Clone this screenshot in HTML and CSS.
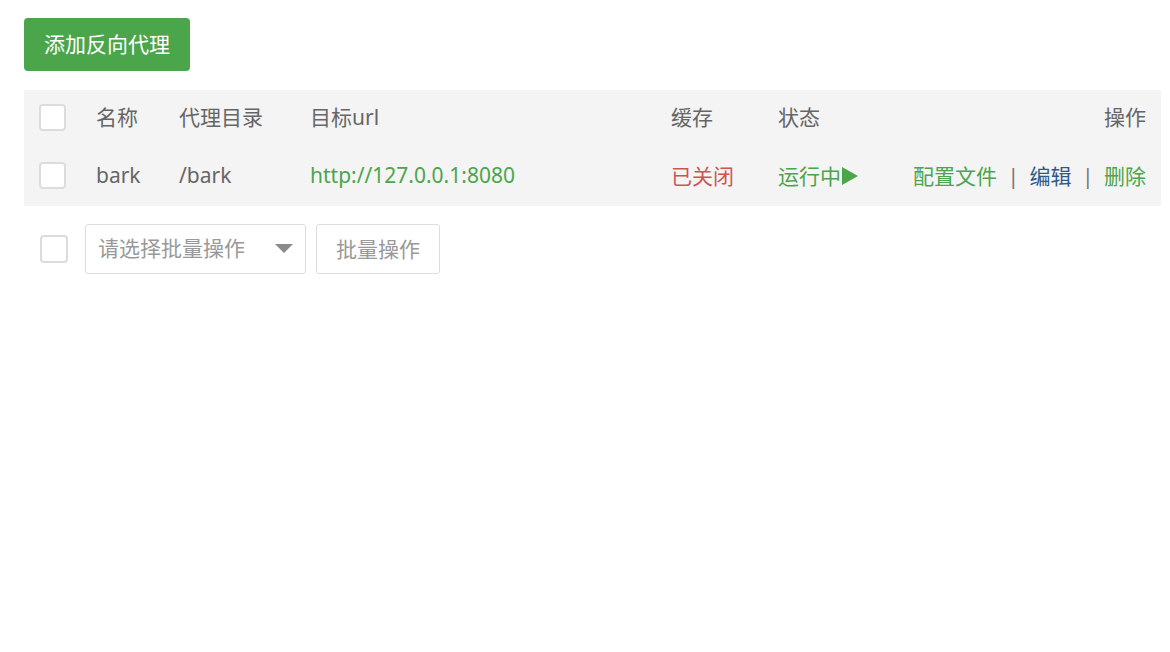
FILE: index.html
```html
<!DOCTYPE html>
<html lang="zh-CN">
<head>
    <meta charset="UTF-8">
    <meta name="viewport" content="width=device-width, initial-scale=1.0">
    <title>反向代理</title>
    <link rel="stylesheet" href="styles.css">
</head>
<body>
    <div class="page">
        <button class="btn-add">添加反向代理</button>

        <table class="proxy-table">
            <thead>
                <tr>
                    <th class="col-check"><input type="checkbox" class="check"></th>
                    <th class="col-name">名称</th>
                    <th class="col-dir">代理目录</th>
                    <th class="col-url">目标url</th>
                    <th class="col-cache">缓存</th>
                    <th class="col-status">状态</th>
                    <th class="col-ops">操作</th>
                </tr>
            </thead>
            <tbody>
                <tr>
                    <td class="col-check"><input type="checkbox" class="check"></td>
                    <td>bark</td>
                    <td>/bark</td>
                    <td><a class="url" href="#">http://127.0.0.1:8080</a></td>
                    <td class="off">已关闭</td>
                    <td class="running">运行中<span class="play"></span></td>
                    <td class="col-ops">
                        <a class="link-green" href="#">配置文件</a>
                        <span class="sep">|</span>
                        <a class="link-blue" href="#">编辑</a>
                        <span class="sep">|</span>
                        <a class="link-green" href="#">删除</a>
                    </td>
                </tr>
            </tbody>
        </table>

        <div class="batch">
            <input type="checkbox" class="check">
            <div class="select-wrap">
                <select class="batch-select">
                    <option>请选择批量操作</option>
                </select>
            </div>
            <button class="btn-batch">批量操作</button>
        </div>
    </div>
</body>
</html>
```

FILE: styles.css
```css
body {
    margin: 0;
    padding: 0;
    background-color: #fff;
    font-family: "Noto Sans", "Noto Sans CJK SC", sans-serif;
    font-size: 21px;
    color: #666;
}
.page {
    padding: 18px 9px 0 24px;
}
.btn-add {
    display: block;
    height: 53px;
    padding: 0 20px 3px 20px;
    background-color: #4ba54b;
    color: #fff;
    border: none;
    border-radius: 4px;
    font-family: inherit;
    font-size: 21px;
    cursor: pointer;
}
.proxy-table {
    width: 100%;
    margin-top: 19px;
    border-collapse: collapse;
    background-color: #f4f4f4;
}
.proxy-table th,
.proxy-table td {
    padding: 0 15px;
    font-weight: normal;
    text-align: left;
    white-space: nowrap;
}
.proxy-table thead tr {
    height: 56px;
}
.proxy-table thead th {
    padding-bottom: 5px;
}
.proxy-table tbody tr {
    height: 60px;
}
.proxy-table tbody td {
    padding-bottom: 2px;
}
.col-check {
    width: 27px;
}
.col-name {
    width: 53px;
}
.col-dir {
    width: 101px;
}
.col-url {
    width: 331px;
}
.col-cache {
    width: 77px;
}
.proxy-table .col-ops {
    text-align: right;
}
.check {
    appearance: none;
    -webkit-appearance: none;
    display: block;
    width: 27px;
    height: 27px;
    margin: 0;
    background-color: #fff;
    border: 2px solid #dcdcdc;
    border-radius: 4px;
    box-sizing: border-box;
}
.proxy-table thead .check {
    margin-top: 3px;
}
.proxy-table tbody .check {
    margin-top: 1px;
}
a {
    text-decoration: none;
}
.url {
    color: #4ba54b;
}
.off {
    color: #d05353;
}
.running {
    color: #4ba54b;
}
.play {
    display: inline-block;
    width: 0;
    height: 0;
    margin-left: 1px;
    border-top: 9px solid transparent;
    border-bottom: 9px solid transparent;
    border-left: 16px solid #4ba54b;
    vertical-align: -1px;
}
.link-green {
    color: #4ba54b;
}
.link-blue {
    color: #2d5a8a;
}
.sep {
    color: #777;
    margin: 0 5px;
}
.batch {
    display: flex;
    align-items: center;
    margin-top: 18px;
    padding-left: 16px;
}
.batch .check {
    width: 28px;
    height: 28px;
}
.select-wrap {
    position: relative;
    margin-left: 17px;
}
.select-wrap::after {
    content: "";
    position: absolute;
    right: 13px;
    top: 20px;
    border-left: 9px solid transparent;
    border-right: 9px solid transparent;
    border-top: 9px solid #8a8a8a;
}
.batch-select {
    appearance: none;
    -webkit-appearance: none;
    width: 221px;
    height: 50px;
    padding: 0 12px 2px;
    background-color: #fff;
    border: 1px solid #ddd;
    border-radius: 3px;
    color: #999;
    font-family: inherit;
    font-size: 21px;
}
.btn-batch {
    height: 50px;
    margin-left: 10px;
    padding: 0 19px 2px;
    background-color: #fff;
    border: 1px solid #ddd;
    border-radius: 3px;
    color: #999;
    font-family: inherit;
    font-size: 21px;
}
```
